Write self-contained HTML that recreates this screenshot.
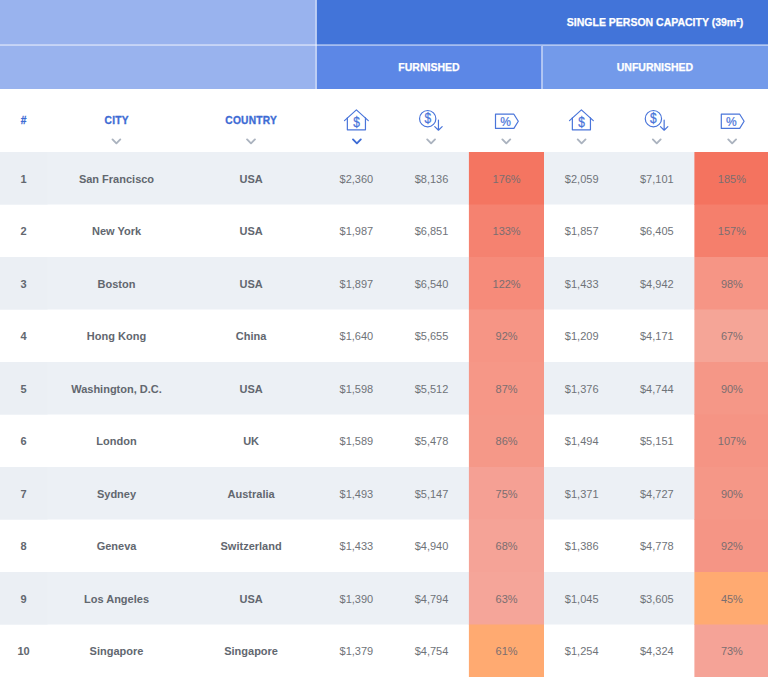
<!DOCTYPE html>
<html lang="en">
<head>
<meta charset="utf-8">
<title>Rent index table</title>
<style>
html,body{margin:0;padding:0;}
body{width:768px;height:677px;position:relative;overflow:hidden;background:#fff;font-family:"Liberation Sans",sans-serif;}
svg{position:absolute;left:0;top:0;overflow:visible;}
.hd{position:absolute;-webkit-text-stroke:0.25px #fff;color:#fff;font-weight:bold;font-size:10.5px;line-height:12px;white-space:nowrap;text-align:center;}
.th{position:absolute;-webkit-text-stroke:0.3px #3D6BD4;color:#3D6BD4;font-weight:bold;font-size:10.2px;letter-spacing:0.25px;line-height:12px;width:100px;margin-left:-50px;text-align:center;white-space:nowrap;}
.row{position:absolute;left:0;width:768px;height:52px;}
.c{position:absolute;top:0;height:52px;line-height:52px;width:140px;margin-left:-70px;text-align:center;font-size:11px;white-space:nowrap;color:#6F7379;}
.c.b{font-weight:bold;color:#62676F;}
.c.pt{color:#7B6E70;}
</style>
</head>
<body>
<svg width="768" height="677" viewBox="0 0 768 677">
<rect x="0" y="0" width="768" height="89" fill="#99B3EE"/>
<rect x="316.5" y="0" width="452" height="45" fill="#4274D9"/>
<rect x="316.5" y="45" width="225.5" height="44" fill="#5C87E6"/>
<rect x="542" y="45" width="226" height="44" fill="#739AEA"/>
<rect x="0" y="44.2" width="768" height="1.7" fill="#fff" fill-opacity="0.5"/>
<rect x="315.3" y="0" width="1.7" height="89" fill="#fff" fill-opacity="0.5"/>
<rect x="541" y="46" width="1.9" height="43" fill="#fff" fill-opacity="0.5"/>
<rect x="0" y="152.0" width="768" height="52.5" fill="#ECF0F5"/><rect x="0" y="152.0" width="47.5" height="52.5" fill="#EBEFF4"/><rect x="468.9" y="152.0" width="75.1" height="53" fill="#F47561"/><rect x="694.4" y="152.0" width="75" height="53" fill="#F4735F"/>
<rect x="468.9" y="204.5" width="75.1" height="53" fill="#F58270"/><rect x="694.4" y="204.5" width="75" height="53" fill="#F57F6C"/>
<rect x="0" y="257.0" width="768" height="52.5" fill="#ECF0F5"/><rect x="0" y="257.0" width="47.5" height="52.5" fill="#EBEFF4"/><rect x="468.9" y="257.0" width="75.1" height="53" fill="#F68B7A"/><rect x="694.4" y="257.0" width="75" height="53" fill="#F69585"/>
<rect x="468.9" y="309.5" width="75.1" height="53" fill="#F69585"/><rect x="694.4" y="309.5" width="75" height="53" fill="#F5A597"/>
<rect x="0" y="362.0" width="768" height="52.5" fill="#ECF0F5"/><rect x="0" y="362.0" width="47.5" height="52.5" fill="#EBEFF4"/><rect x="468.9" y="362.0" width="75.1" height="53" fill="#F69787"/><rect x="694.4" y="362.0" width="75" height="53" fill="#F59787"/>
<rect x="468.9" y="414.5" width="75.1" height="53" fill="#F59888"/><rect x="694.4" y="414.5" width="75" height="53" fill="#F59484"/>
<rect x="0" y="467.0" width="768" height="52.5" fill="#ECF0F5"/><rect x="0" y="467.0" width="47.5" height="52.5" fill="#EBEFF4"/><rect x="468.9" y="467.0" width="75.1" height="53" fill="#F5A094"/><rect x="694.4" y="467.0" width="75" height="53" fill="#F59787"/>
<rect x="468.9" y="519.5" width="75.1" height="53" fill="#F5A397"/><rect x="694.4" y="519.5" width="75" height="53" fill="#F59585"/>
<rect x="0" y="572.0" width="768" height="52.5" fill="#ECF0F5"/><rect x="0" y="572.0" width="47.5" height="52.5" fill="#EBEFF4"/><rect x="468.9" y="572.0" width="75.1" height="53" fill="#F5A599"/><rect x="694.4" y="572.0" width="75" height="53" fill="#FFAA71"/>
<rect x="468.9" y="624.5" width="75.1" height="53" fill="#FFAA71"/><rect x="694.4" y="624.5" width="75" height="53" fill="#F5A397"/>
<path d="M112.50 139.4 L116.40 143.3 L120.30 139.4" fill="none" stroke="#ABB3BF" stroke-width="1.9" stroke-linecap="round" stroke-linejoin="round"/>
<path d="M247.10 139.4 L251.00 143.3 L254.90 139.4" fill="none" stroke="#ABB3BF" stroke-width="1.9" stroke-linecap="round" stroke-linejoin="round"/>
<path d="M353.00 139.4 L356.90 143.3 L360.80 139.4" fill="none" stroke="#3D6BD4" stroke-width="1.9" stroke-linecap="round" stroke-linejoin="round"/>
<path d="M427.20 139.4 L431.10 143.3 L435.00 139.4" fill="none" stroke="#ABB3BF" stroke-width="1.9" stroke-linecap="round" stroke-linejoin="round"/>
<path d="M502.40 139.4 L506.30 143.3 L510.20 139.4" fill="none" stroke="#ABB3BF" stroke-width="1.9" stroke-linecap="round" stroke-linejoin="round"/>
<path d="M577.70 139.4 L581.60 143.3 L585.50 139.4" fill="none" stroke="#ABB3BF" stroke-width="1.9" stroke-linecap="round" stroke-linejoin="round"/>
<path d="M652.85 139.4 L656.75 143.3 L660.65 139.4" fill="none" stroke="#ABB3BF" stroke-width="1.9" stroke-linecap="round" stroke-linejoin="round"/>
<path d="M728.25 139.4 L732.15 143.3 L736.05 139.4" fill="none" stroke="#ABB3BF" stroke-width="1.9" stroke-linecap="round" stroke-linejoin="round"/>
<g fill="none" stroke="#4A75DA" stroke-width="1.2" stroke-linecap="round" stroke-linejoin="round"><path d="M344.50 120.6 L356.40 109.9 L368.30 120.6"/><path d="M347.35 117.9 V129.8 H365.45 V117.9"/></g><text transform="translate(356.50 126.7) scale(0.92 1.12)" text-anchor="middle" font-family="Liberation Sans, sans-serif" font-size="13" fill="#4A75DA" stroke="#4A75DA" stroke-width="0.25">$</text>
<g fill="none" stroke="#4A75DA" stroke-width="1.2" stroke-linecap="round" stroke-linejoin="round"><circle cx="427.70" cy="118.65" r="8.15"/><path d="M438.45 120 V130 M434.75 126.6 L438.45 130.2 L442.15 126.6"/></g><text transform="translate(427.70 123.2) scale(0.92 1.12)" text-anchor="middle" font-family="Liberation Sans, sans-serif" font-size="13" fill="#4A75DA" stroke="#4A75DA" stroke-width="0.25">$</text>
<g fill="none" stroke="#4A75DA" stroke-width="1.2" stroke-linecap="round" stroke-linejoin="round"><path d="M495.50 114.2 H513.90 L518.30 121.3 L513.90 128.4 H495.50 Z"/></g><text x="505.50" y="125.7" text-anchor="middle" font-family="Liberation Sans, sans-serif" font-size="12" fill="#4A75DA" stroke="#4A75DA" stroke-width="0.2">%</text>
<g fill="none" stroke="#4A75DA" stroke-width="1.2" stroke-linecap="round" stroke-linejoin="round"><path d="M569.50 120.6 L581.40 109.9 L593.30 120.6"/><path d="M572.35 117.9 V129.8 H590.45 V117.9"/></g><text transform="translate(581.50 126.7) scale(0.92 1.12)" text-anchor="middle" font-family="Liberation Sans, sans-serif" font-size="13" fill="#4A75DA" stroke="#4A75DA" stroke-width="0.25">$</text>
<g fill="none" stroke="#4A75DA" stroke-width="1.2" stroke-linecap="round" stroke-linejoin="round"><circle cx="653.40" cy="118.65" r="8.15"/><path d="M664.15 120 V130 M660.45 126.6 L664.15 130.2 L667.85 126.6"/></g><text transform="translate(653.40 123.2) scale(0.92 1.12)" text-anchor="middle" font-family="Liberation Sans, sans-serif" font-size="13" fill="#4A75DA" stroke="#4A75DA" stroke-width="0.25">$</text>
<g fill="none" stroke="#4A75DA" stroke-width="1.2" stroke-linecap="round" stroke-linejoin="round"><path d="M721.30 114.2 H739.70 L744.10 121.3 L739.70 128.4 H721.30 Z"/></g><text x="731.30" y="125.7" text-anchor="middle" font-family="Liberation Sans, sans-serif" font-size="12" fill="#4A75DA" stroke="#4A75DA" stroke-width="0.2">%</text>
</svg>
<div class="hd" style="left:555px;width:200px;top:16px;">SINGLE PERSON CAPACITY (39m²)</div>
<div class="hd" style="left:379px;width:100px;top:61px;">FURNISHED</div>
<div class="hd" style="left:605px;width:100px;top:61px;">UNFURNISHED</div>
<div class="th" style="left:23.8px;top:115px;">#</div>
<div class="th" style="left:116.7px;top:115px;">CITY</div>
<div class="th" style="left:251.2px;top:115px;">COUNTRY</div>
<div class="row" style="top:152.6px;"><div class="c b" style="left:23.5px;">1</div><div class="c b" style="left:116.5px;">San Francisco</div><div class="c b" style="left:251.1px;">USA</div><div class="c" style="left:356.4px;">$2,360</div><div class="c" style="left:431.5px;">$8,136</div><div class="c pt" style="left:506.6px;">176%</div><div class="c" style="left:581.7px;">$2,059</div><div class="c" style="left:656.8px;">$7,101</div><div class="c pt" style="left:731.9px;">185%</div></div>
<div class="row" style="top:205.1px;"><div class="c b" style="left:23.5px;">2</div><div class="c b" style="left:116.5px;">New York</div><div class="c b" style="left:251.1px;">USA</div><div class="c" style="left:356.4px;">$1,987</div><div class="c" style="left:431.5px;">$6,851</div><div class="c pt" style="left:506.6px;">133%</div><div class="c" style="left:581.7px;">$1,857</div><div class="c" style="left:656.8px;">$6,405</div><div class="c pt" style="left:731.9px;">157%</div></div>
<div class="row" style="top:257.6px;"><div class="c b" style="left:23.5px;">3</div><div class="c b" style="left:116.5px;">Boston</div><div class="c b" style="left:251.1px;">USA</div><div class="c" style="left:356.4px;">$1,897</div><div class="c" style="left:431.5px;">$6,540</div><div class="c pt" style="left:506.6px;">122%</div><div class="c" style="left:581.7px;">$1,433</div><div class="c" style="left:656.8px;">$4,942</div><div class="c pt" style="left:731.9px;">98%</div></div>
<div class="row" style="top:310.1px;"><div class="c b" style="left:23.5px;">4</div><div class="c b" style="left:116.5px;">Hong Kong</div><div class="c b" style="left:251.1px;">China</div><div class="c" style="left:356.4px;">$1,640</div><div class="c" style="left:431.5px;">$5,655</div><div class="c pt" style="left:506.6px;">92%</div><div class="c" style="left:581.7px;">$1,209</div><div class="c" style="left:656.8px;">$4,171</div><div class="c pt" style="left:731.9px;">67%</div></div>
<div class="row" style="top:362.6px;"><div class="c b" style="left:23.5px;">5</div><div class="c b" style="left:116.5px;">Washington, D.C.</div><div class="c b" style="left:251.1px;">USA</div><div class="c" style="left:356.4px;">$1,598</div><div class="c" style="left:431.5px;">$5,512</div><div class="c pt" style="left:506.6px;">87%</div><div class="c" style="left:581.7px;">$1,376</div><div class="c" style="left:656.8px;">$4,744</div><div class="c pt" style="left:731.9px;">90%</div></div>
<div class="row" style="top:415.1px;"><div class="c b" style="left:23.5px;">6</div><div class="c b" style="left:116.5px;">London</div><div class="c b" style="left:251.1px;">UK</div><div class="c" style="left:356.4px;">$1,589</div><div class="c" style="left:431.5px;">$5,478</div><div class="c pt" style="left:506.6px;">86%</div><div class="c" style="left:581.7px;">$1,494</div><div class="c" style="left:656.8px;">$5,151</div><div class="c pt" style="left:731.9px;">107%</div></div>
<div class="row" style="top:467.6px;"><div class="c b" style="left:23.5px;">7</div><div class="c b" style="left:116.5px;">Sydney</div><div class="c b" style="left:251.1px;">Australia</div><div class="c" style="left:356.4px;">$1,493</div><div class="c" style="left:431.5px;">$5,147</div><div class="c pt" style="left:506.6px;">75%</div><div class="c" style="left:581.7px;">$1,371</div><div class="c" style="left:656.8px;">$4,727</div><div class="c pt" style="left:731.9px;">90%</div></div>
<div class="row" style="top:520.1px;"><div class="c b" style="left:23.5px;">8</div><div class="c b" style="left:116.5px;">Geneva</div><div class="c b" style="left:251.1px;">Switzerland</div><div class="c" style="left:356.4px;">$1,433</div><div class="c" style="left:431.5px;">$4,940</div><div class="c pt" style="left:506.6px;">68%</div><div class="c" style="left:581.7px;">$1,386</div><div class="c" style="left:656.8px;">$4,778</div><div class="c pt" style="left:731.9px;">92%</div></div>
<div class="row" style="top:572.6px;"><div class="c b" style="left:23.5px;">9</div><div class="c b" style="left:116.5px;">Los Angeles</div><div class="c b" style="left:251.1px;">USA</div><div class="c" style="left:356.4px;">$1,390</div><div class="c" style="left:431.5px;">$4,794</div><div class="c pt" style="left:506.6px;">63%</div><div class="c" style="left:581.7px;">$1,045</div><div class="c" style="left:656.8px;">$3,605</div><div class="c pt" style="left:731.9px;">45%</div></div>
<div class="row" style="top:625.1px;"><div class="c b" style="left:23.5px;">10</div><div class="c b" style="left:116.5px;">Singapore</div><div class="c b" style="left:251.1px;">Singapore</div><div class="c" style="left:356.4px;">$1,379</div><div class="c" style="left:431.5px;">$4,754</div><div class="c pt" style="left:506.6px;">61%</div><div class="c" style="left:581.7px;">$1,254</div><div class="c" style="left:656.8px;">$4,324</div><div class="c pt" style="left:731.9px;">73%</div></div>
</body>
</html>
